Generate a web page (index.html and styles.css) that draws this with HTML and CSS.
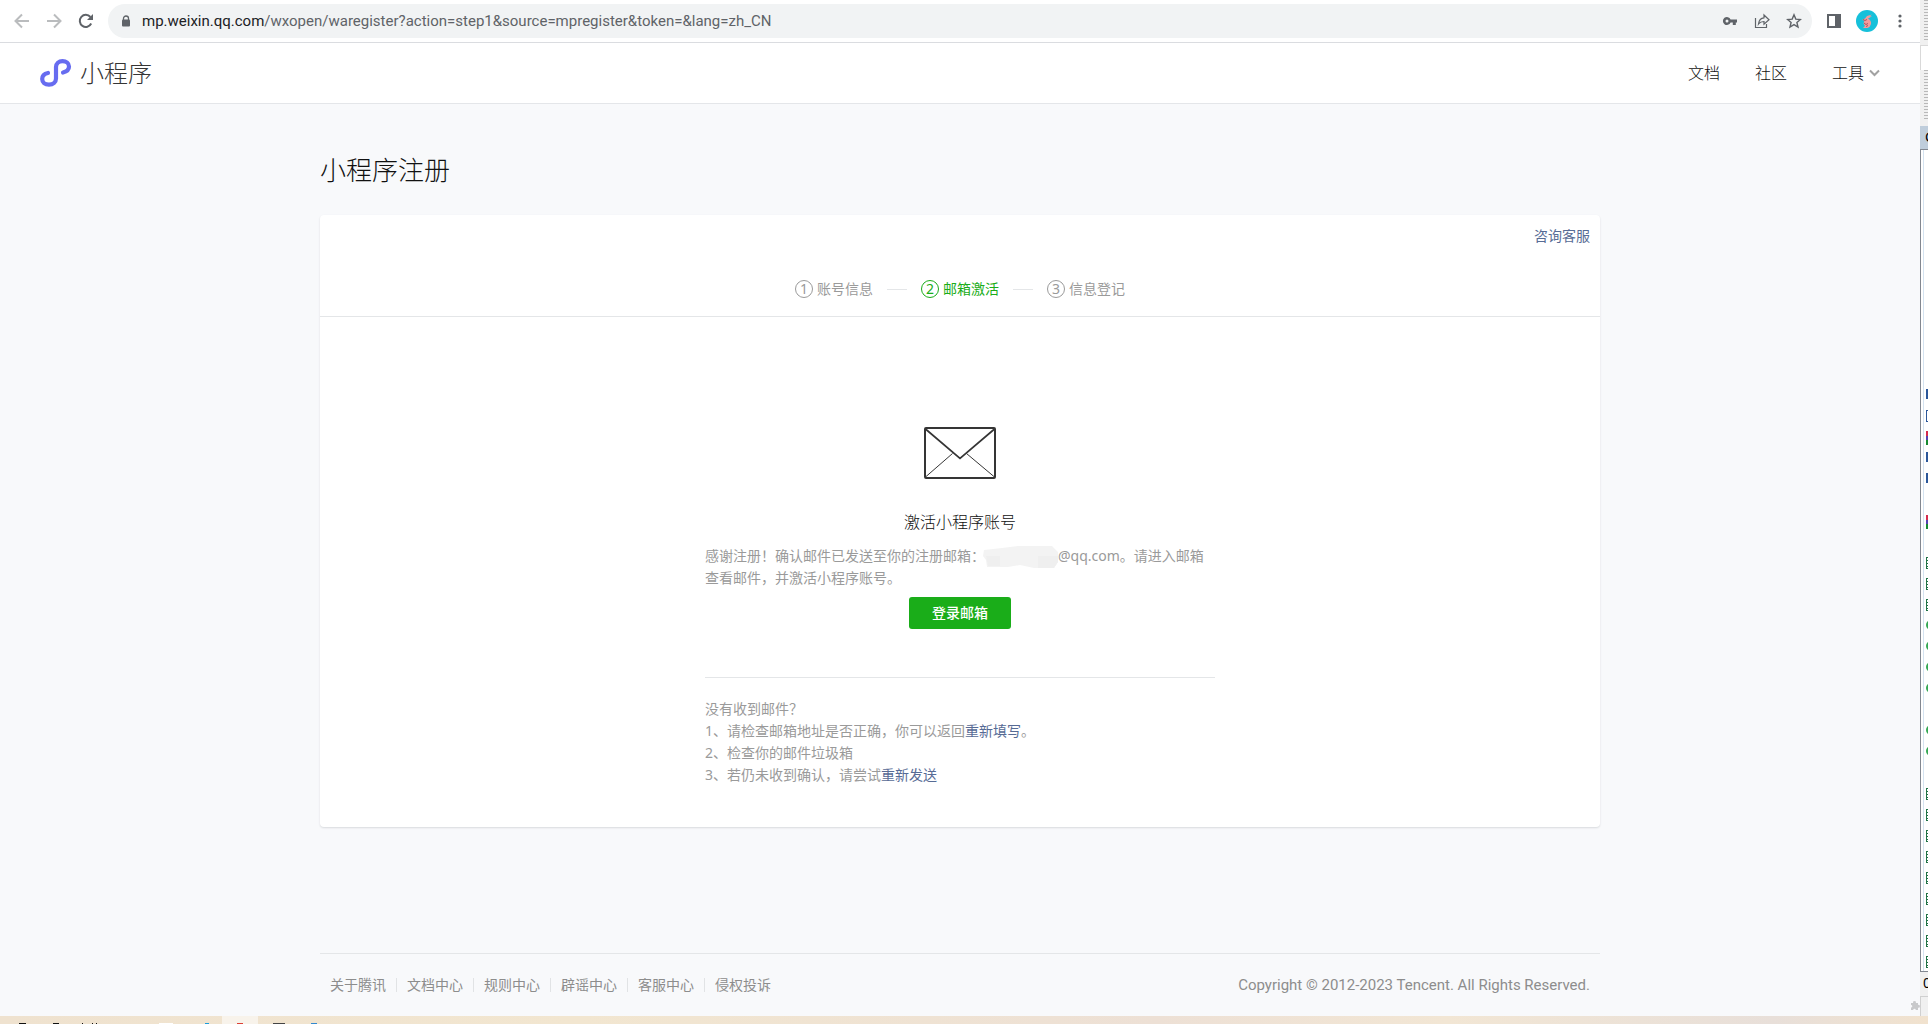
FILE: index.html
```html
<!DOCTYPE html>
<html lang="zh-CN">
<head>
<meta charset="utf-8">
<title>小程序</title>
<link rel="stylesheet" href="styles.css">
</head>
<body>
<div class="screen">
  <div class="browser">
    <div class="toolbar">
      <button class="tool" aria-label="后退"><svg width="16" height="16" viewBox="0 0 16 16" fill="none" stroke="#babcbe" stroke-width="2"><path d="M15 8H2M8 1.5 1.5 8 8 14.500"/></svg></button>
      <button class="tool" aria-label="前进"><svg width="16" height="16" viewBox="0 0 16 16" fill="none" stroke="#babcbe" stroke-width="2"><path d="M1 8h13M8 1.500 14.500 8 8 14.500"/></svg></button>
      <button class="tool" aria-label="刷新"><svg width="16" height="16" viewBox="0 0 16 16"><path d="M13.200 10.500A6 6 0 1 1 12.400 4" fill="none" stroke="#5f6368" stroke-width="2"/><path d="M15 1v6H9z" fill="#5f6368"/></svg></button>
      <div class="address">
        <svg width="10" height="12" viewBox="0 0 10 12"><path d="M2.500 5V3.300a2.500 2.300 0 0 1 5 0V5" fill="none" stroke="#5f6368" stroke-width="1.300"/><rect x="1" y="4.500" width="8" height="7" rx="1" fill="#5f6368"/></svg>
        <div class="url" role="textbox" aria-label="地址"><span class="host">mp.weixin.qq.com</span>/wxopen/waregister?action=step1&amp;source=mpregister&amp;token=&amp;lang=zh_CN</div>
        <button class="tool" aria-label="密码"><svg width="16" height="16" viewBox="0 0 16 16"><path fill="#5f6368" fill-rule="evenodd" d="M8.600 6.500H15v3h-1.200V12h-3V9.500H8.600a4 4 0 1 1 0-3zM5 6.500a1.500 1.500 0 1 0 0 3 1.500 1.500 0 0 0 0-3z"/></svg></button>
        <button class="tool" aria-label="分享"><svg width="16" height="16" viewBox="0 0 16 16" fill="none" stroke="#5f6368" stroke-width="1.200"><path d="M1.500 5v9.500h11V11"/><path d="M4.500 11c.5-4 2.500-6 5.500-6.200V2l5 4.700-5 4.500V8.500C7.500 8.500 5.800 9.300 4.500 11z"/></svg></button>
        <button class="tool" aria-label="收藏"><svg width="16" height="16" viewBox="0 0 16 16" fill="none" stroke="#5f6368" stroke-width="1.400"><path d="m8 1.800 1.800 4.300 4.600.4-3.500 3 1.100 4.600L8 11.600l-4 2.500 1.100-4.600-3.500-3 4.600-.4z"/></svg></button>
      </div>
      <button class="tool" aria-label="侧边栏"><svg width="16" height="16" viewBox="0 0 16 16"><path d="M1 1h14v14H1zM3 3v10h6V3z" fill="#5f6368" fill-rule="evenodd"/></svg></button>
      <button class="tool profile" aria-label="个人资料"><svg width="22" height="22" viewBox="0 0 22 22"><circle cx="11" cy="11" r="11" fill="#16c0da"/><path d="M9 8.500 11 6l5-1.500-2.500 2 2.500-.5-2 1.500-2 1c2 1 3.500 3 3 5.500l-1.500 3-2 1H7l2-2-1.500-2.500 1-3-2.500-.5z" fill="#f59a9c"/><path d="m7 9.500 2 1 2-1M8 13l2 1.500 2-1M10 16.500l2-1" fill="none" stroke="#a8555e"/></svg></button>
      <button class="tool" aria-label="菜单"><svg width="16" height="16" viewBox="0 0 16 16" fill="#5f6368"><circle cx="8" cy="3" r="1.600"/><circle cx="8" cy="8" r="1.600"/><circle cx="8" cy="13" r="1.600"/></svg></button>
    </div>
    <header class="header">
      <a class="brand" href="#">
        <svg width="32" height="30" viewBox="0 0 32 30" fill="none" stroke="#676cf0" stroke-width="4.200" stroke-linecap="round"><path d="M23 14.500C27 13.500 29 11.200 29 8.500C29 5.400 26.200 3.100 22.500 3.100S16 5.500 16 9V20.500C16 24.200 13.100 26.700 9 26.700S2.200 24.300 2.200 21S5 15.600 8 15"/></svg>
        <span>小程序</span>
      </a>
      <nav class="nav">
        <a href="#">文档</a>
        <a href="#">社区</a>
        <a class="more" href="#">工具<svg width="11" height="8" viewBox="0 0 11 8" fill="none" stroke="#a2a2a2" stroke-width="2"><path d="m1 1.500 4.500 4.500L10 1.500"/></svg></a>
      </nav>
    </header>
    <main class="main">
      <h1>小程序注册</h1>
      <section class="card">
        <div class="support"><a href="#">咨询客服</a></div>
        <ol class="steps">
          <li><i>1</i>账号信息</li>
          <li class="current"><i>2</i>邮箱激活</li>
          <li><i>3</i>信息登记</li>
        </ol>
        <div class="activate">
          <svg class="mail" width="72" height="52" viewBox="0 0 72 52" fill="none" stroke="#353535"><path d="M1.500 50 28.500 26.500M70.500 50 42.500 26.500" stroke-width="1"/><path d="m1.500 2 34.500 29.500L70.500 2" stroke-width="1.700"/><rect x="1" y="1" width="70" height="50" rx="1" stroke-width="2"/></svg>
          <h2>激活小程序账号</h2>
          <p>感谢注册！确认邮件已发送至你的注册邮箱：<svg class="mask" width="76" height="22" viewBox="0 0 76 22"><path d="M2 4 20 2 36 0h34l6 6v10l-4 6H52l-14-3-12 2H5l-1-7-3-4z" fill="#f3f3f3"/><path d="M4 10h14v10H6zM56 10h20v6l-4 6H56z" fill="#efefef"/></svg>@qq.com。请进入邮箱查看邮件，并激活小程序账号。</p>
          <button class="primary">登录邮箱</button>
          <div class="help">
            <p>没有收到邮件？</p>
            <p>1、请检查邮箱地址是否正确，你可以返回<a href="#">重新填写</a>。</p>
            <p>2、检查你的邮件垃圾箱</p>
            <p>3、若仍未收到确认，请尝试<a href="#">重新发送</a></p>
          </div>
        </div>
      </section>
      <footer class="footer">
        <ul>
          <li><a href="#">关于腾讯</a></li>
          <li><a href="#">文档中心</a></li>
          <li><a href="#">规则中心</a></li>
          <li><a href="#">辟谣中心</a></li>
          <li><a href="#">客服中心</a></li>
          <li><a href="#">侵权投诉</a></li>
        </ul>
        <span class="copyright">Copyright © 2012-2023 Tencent. All Rights Reserved.</span>
      </footer>
      <svg class="puzzle" width="10" height="10" viewBox="0 0 10 10" fill="#c8c9cb"><path d="M1 3h2.200a1.400 1.400 0 1 1 2.600 0H8v2a1.400 1.400 0 1 1 0 2.600V10H5.800a1.300 1.300 0 0 0-2.600 0H1V7.600A1.300 1.300 0 0 0 1 5z"/></svg>
    </main>
  </div>
  <aside class="behind">
    <div class="grip"></div>
    <div class="field"></div>
    <div class="grip tall"></div>
    <div class="caption">C</div>
    <div class="files">
      <i class="word"></i><i class="doc"></i><i class="zip"></i><i class="word"></i><i class="word"></i><i></i><i class="zip"></i><i></i>
      <i class="sheet"></i><i class="sheet"></i><i class="sheet"></i><i class="web"></i><i class="web"></i><i class="web"></i><i class="web"></i><i></i><i class="web"></i><i class="web"></i><i></i>
      <i class="sheet"></i><i class="sheet"></i><i class="sheet"></i><i class="sheet"></i><i class="sheet"></i><i class="sheet"></i><i class="sheet"></i><i class="sheet"></i><i class="sheet"></i>
    </div>
    <div class="count">0</div>
    <div class="corner"></div>
  </aside>
</div>
<div class="taskbar">
  <svg width="330" height="8" viewBox="0 0 330 8"><path d="M222 0h36v8h-36z" fill="#f8f3eb"/><path d="M19 7h7v1h-7zM53 7h6v1h-6zM82 7h1v1h-1zM92 7h1v1h-1zM96 7h1v1h-1z" fill="#111"/><path d="M159 7h14v1h-14z" fill="#fff"/><path d="M205 7h4v1h-4z" fill="#1b9ddb"/><path d="M237 7h6v1h-6z" fill="#dc4035"/><path d="M273 7h12v1h-12z" fill="#444"/><path d="M311 7h6v1h-6z" fill="#3288cf"/></svg>
</div>
</body>
</html>
```
FILE: styles.css
```css
* { box-sizing: border-box; }
body {
  margin: 0;
  min-height: 100vh;
  display: flex;
  flex-direction: column;
  background: #f8f9fb;
  color: #353535;
  font: 14px/22px "Noto Sans", "Noto Sans CJK SC", sans-serif;
}
h1, h2, p, ul, ol { margin: 0; padding: 0; font-weight: 300; }
ul, ol, p { font-weight: 400; }
ul, ol { list-style: none; }
a { color: #576b95; text-decoration: none; }
i { font-style: normal; }
svg { display: block; flex: none; }
button { font: inherit; border: 0; padding: 0; background: none; }

.screen { flex: 1; display: flex; }
.browser { flex: 1; display: flex; flex-direction: column; }

.toolbar {
  height: 43px;
  padding: 0 12px 0 14px;
  display: flex;
  align-items: center;
  gap: 16px;
  background: #fff;
  border-bottom: 1px solid #dadce0;
}
.profile { margin: 0 -2px; }
.address {
  flex: 1;
  height: 34px;
  margin: 0 -2px;
  padding: 0 10px 0 13px;
  display: flex;
  align-items: center;
  gap: 16px;
  border-radius: 17px;
  background: #f1f3f4;
}
.url { flex: 1; margin-left: -5px; color: #5f6368; }
.url, .copyright { font-family: Roboto, "Noto Sans CJK SC", sans-serif; font-size: 15px; }
.host { color: #202124; }

.header {
  height: 61px;
  padding: 0 40px;
  display: flex;
  align-items: center;
  justify-content: space-between;
  background: #fff;
  border-bottom: 1px solid #e4e6e9;
}
.brand { display: flex; align-items: center; gap: 8px; font-size: 24px; font-weight: 300; color: #353535; }
.nav { display: flex; gap: 35px; font-size: 16px; font-weight: 300; }
.nav a { color: #111; }
.nav .more { display: flex; align-items: center; gap: 5px; margin-left: 10px; }

.main { position: relative; flex: 1; padding: 48px 0 0; display: flex; flex-direction: column; align-items: center; }
h1 { width: 100%; max-width: 1280px; margin-bottom: 27px; font-size: 26px; line-height: 36px; }
.card {
  width: 100%;
  max-width: 1280px;
  padding-bottom: 40px;
  background: #fff;
  border-radius: 4px;
  box-shadow: 0 1px 2px #d8dade;
}
.support { padding: 10px 10px 0; text-align: right; }
.steps {
  padding: 31px 0 16px;
  display: flex;
  justify-content: center;
  border-bottom: 1px solid #e4e6e8;
  color: #9a9a9a;
}
.steps li { display: flex; align-items: center; }
.steps li + li::before { content: ""; width: 20px; height: 1px; margin: 0 14px; background: #e4e6e8; }
.steps i {
  width: 18px;
  height: 18px;
  margin-right: 4px;
  border: 1px solid;
  border-radius: 50%;
  line-height: 16px;
  text-align: center;
}
.steps .current { color: #1aad19; }

.activate {
  max-width: 510px;
  margin: 0 auto;
  padding-top: 110px;
  display: flex;
  flex-direction: column;
  align-items: center;
  color: #9a9a9a;
}
h2 { margin: 32px 0 12px; font-size: 16px; line-height: 22px; }
h1, h2 { color: #111; }
.mask { display: inline-block; vertical-align: middle; margin: -2px 0 -2px -3px; }
.primary {
  width: 102px;
  height: 32px;
  margin: 8px 0 48px;
  border-radius: 3px;
  background: #1aad19;
  color: #fff;
  font-weight: 500;
}
.help { width: 100%; padding: 20px 0 1px; border-top: 1px solid #e4e6e8; }

.footer {
  width: 100%;
  max-width: 1280px;
  margin-top: 126px;
  padding: 20px 10px 16px;
  display: flex;
  justify-content: space-between;
  border-top: 1px solid #e4e6e8;
  color: #8d8d8d;
}
.footer ul { display: flex; }
.footer li { display: flex; align-items: center; }
.footer li + li::before { content: ""; width: 1px; height: 14px; margin: 0 10px; background: #e1e3e5; }
.footer a { color: #8d8d8d; }
.puzzle { position: absolute; right: 0; bottom: 6px; }

.behind { width: 8px; display: flex; flex-direction: column; overflow: hidden; background: #f0f0f0; color: #000; }
.grip { height: 45px; margin-left: 4px; background: repeating-linear-gradient(#b8b8b8 0 1px, #f0f0f0 1px 3px); border-bottom: 5px solid #f0f0f0; }
.grip.tall { height: 56px; }
.field { height: 25px; background: #fff; border: 1px solid #d9d9d9; border-width: 1px 0 0 1px; }
.caption { height: 23px; padding-left: 5px; background: #bfcddb; }
.files {
  flex: 1 1 0;
  height: 0;
  min-height: 0;
  overflow: hidden;
  padding: 234px 0 0 3px;
  border: 1px solid #828790;
  border-right: 0;
  background: linear-gradient(90deg, #fff 2px, #d5e3f0 2px 3px, #fff 3px);
}
.files i { display: block; height: 20px; margin-bottom: 1px; padding: 5px 0 0 2px; }
.files i:last-child { height: 16px; margin: 0; }
.files i::before { content: ""; display: block; width: 10px; height: 10px; }
.files .word::before { background: #2b579a; }
.files .doc::before { border: 1px solid #2b579a; }
.files .sheet::before { border: 1px solid #217346; background: repeating-linear-gradient(#fff 0 2px, #217346 2px 3px); }
.files .web::before { border-radius: 50%; background: #34a853; }
.files .zip::before { height: 14px; background: linear-gradient(#d52b4d 0 5px, #5542b0 5px 9px, #168a31 9px); }
.count { height: 24px; padding-left: 3px; }
.corner { height: 20px; border: 1px solid #d0d0d0; border-width: 1px 0 0 1px; }

.taskbar { height: 8px; background: linear-gradient(90deg, #efe2cf, #f2e6d0 30%, #ede0d5 60%, #f2e6d4 75%, #e8dfd9 92%, #f1e2ce); }
```
